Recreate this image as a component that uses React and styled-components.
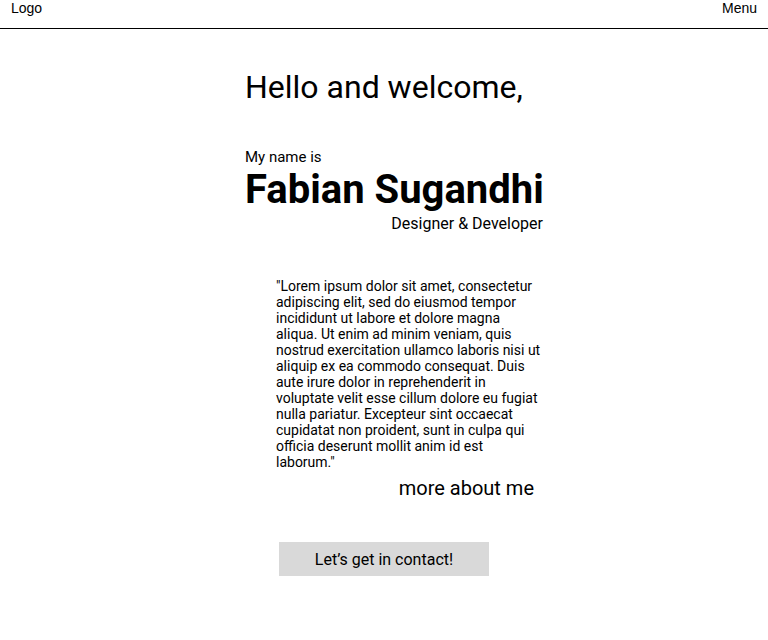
import styled, { createGlobalStyle } from "styled-components";

const GlobalStyle = createGlobalStyle`
  body {
    margin: 0;
    background: #ffffff;
    color: #000000;
    font-family: Roboto, "Liberation Sans", sans-serif;
  }
`;

const TopBar = styled.header`
  height: 28px;
  border-bottom: 1px solid #000000;
  display: flex;
  justify-content: space-between;
  align-items: flex-start;
  padding: 0 11px;
  font-family: "Liberation Sans", Arial, sans-serif;
  font-size: 14px;
  line-height: 16px;
`;

const Main = styled.main`
  padding-left: 245px;
`;

const Column = styled.div`
  width: 298px;
  display: flex;
  flex-direction: column;
`;

const Greeting = styled.h1`
  margin: 39px 0 0;
  font-size: 32px;
  font-weight: 400;
  line-height: 38px;
`;

const Intro = styled.p`
  margin: 42px 0 0;
  font-size: 15px;
  line-height: 18px;
`;

const Name = styled.h2`
  margin: 1px 0 0;
  font-size: 40px;
  font-weight: 700;
  line-height: 46px;
  white-space: nowrap;
`;

const Role = styled.p`
  margin: 1px 0 0;
  font-size: 16px;
  line-height: 20px;
  text-align: right;
`;

const About = styled.section`
  margin: 44px 0 0 31px;
  width: 266px;
  display: flex;
  flex-direction: column;
`;

const Quote = styled.p`
  margin: 0;
  font-size: 14px;
  line-height: 16px;
`;

const MoreLink = styled.a`
  align-self: flex-end;
  margin: 6px 8px 0 0;
  font-size: 20px;
  line-height: 24px;
  color: #000000;
  text-decoration: none;
`;

const ContactButton = styled.button`
  margin: 42px 0 0 34px;
  width: 210px;
  height: 34px;
  border: none;
  background: #d9d9d9;
  font-family: Roboto, "Liberation Sans", sans-serif;
  font-size: 16px;
  color: #000000;
`;

export default function App() {
  return (
    <>
      <GlobalStyle />
      <TopBar>
        <span>Logo</span>
        <span>Menu</span>
      </TopBar>
      <Main>
        <Column>
          <Greeting>Hello and welcome,</Greeting>
          <Intro>My name is</Intro>
          <Name>Fabian Sugandhi</Name>
          <Role>Designer &amp; Developer</Role>
          <About>
            <Quote>
              "Lorem ipsum dolor sit amet, consectetur adipiscing elit, sed do
              eiusmod tempor incididunt ut labore et dolore magna aliqua. Ut
              enim ad minim veniam, quis nostrud exercitation ullamco laboris
              nisi ut aliquip ex ea commodo consequat. Duis aute irure dolor in
              reprehenderit in voluptate velit esse cillum dolore eu fugiat
              nulla pariatur. Excepteur sint occaecat cupidatat non proident,
              sunt in culpa qui officia deserunt mollit anim id est laborum."
            </Quote>
            <MoreLink href="#">more about me</MoreLink>
          </About>
          <ContactButton>Let’s get in contact!</ContactButton>
        </Column>
      </Main>
    </>
  );
}
